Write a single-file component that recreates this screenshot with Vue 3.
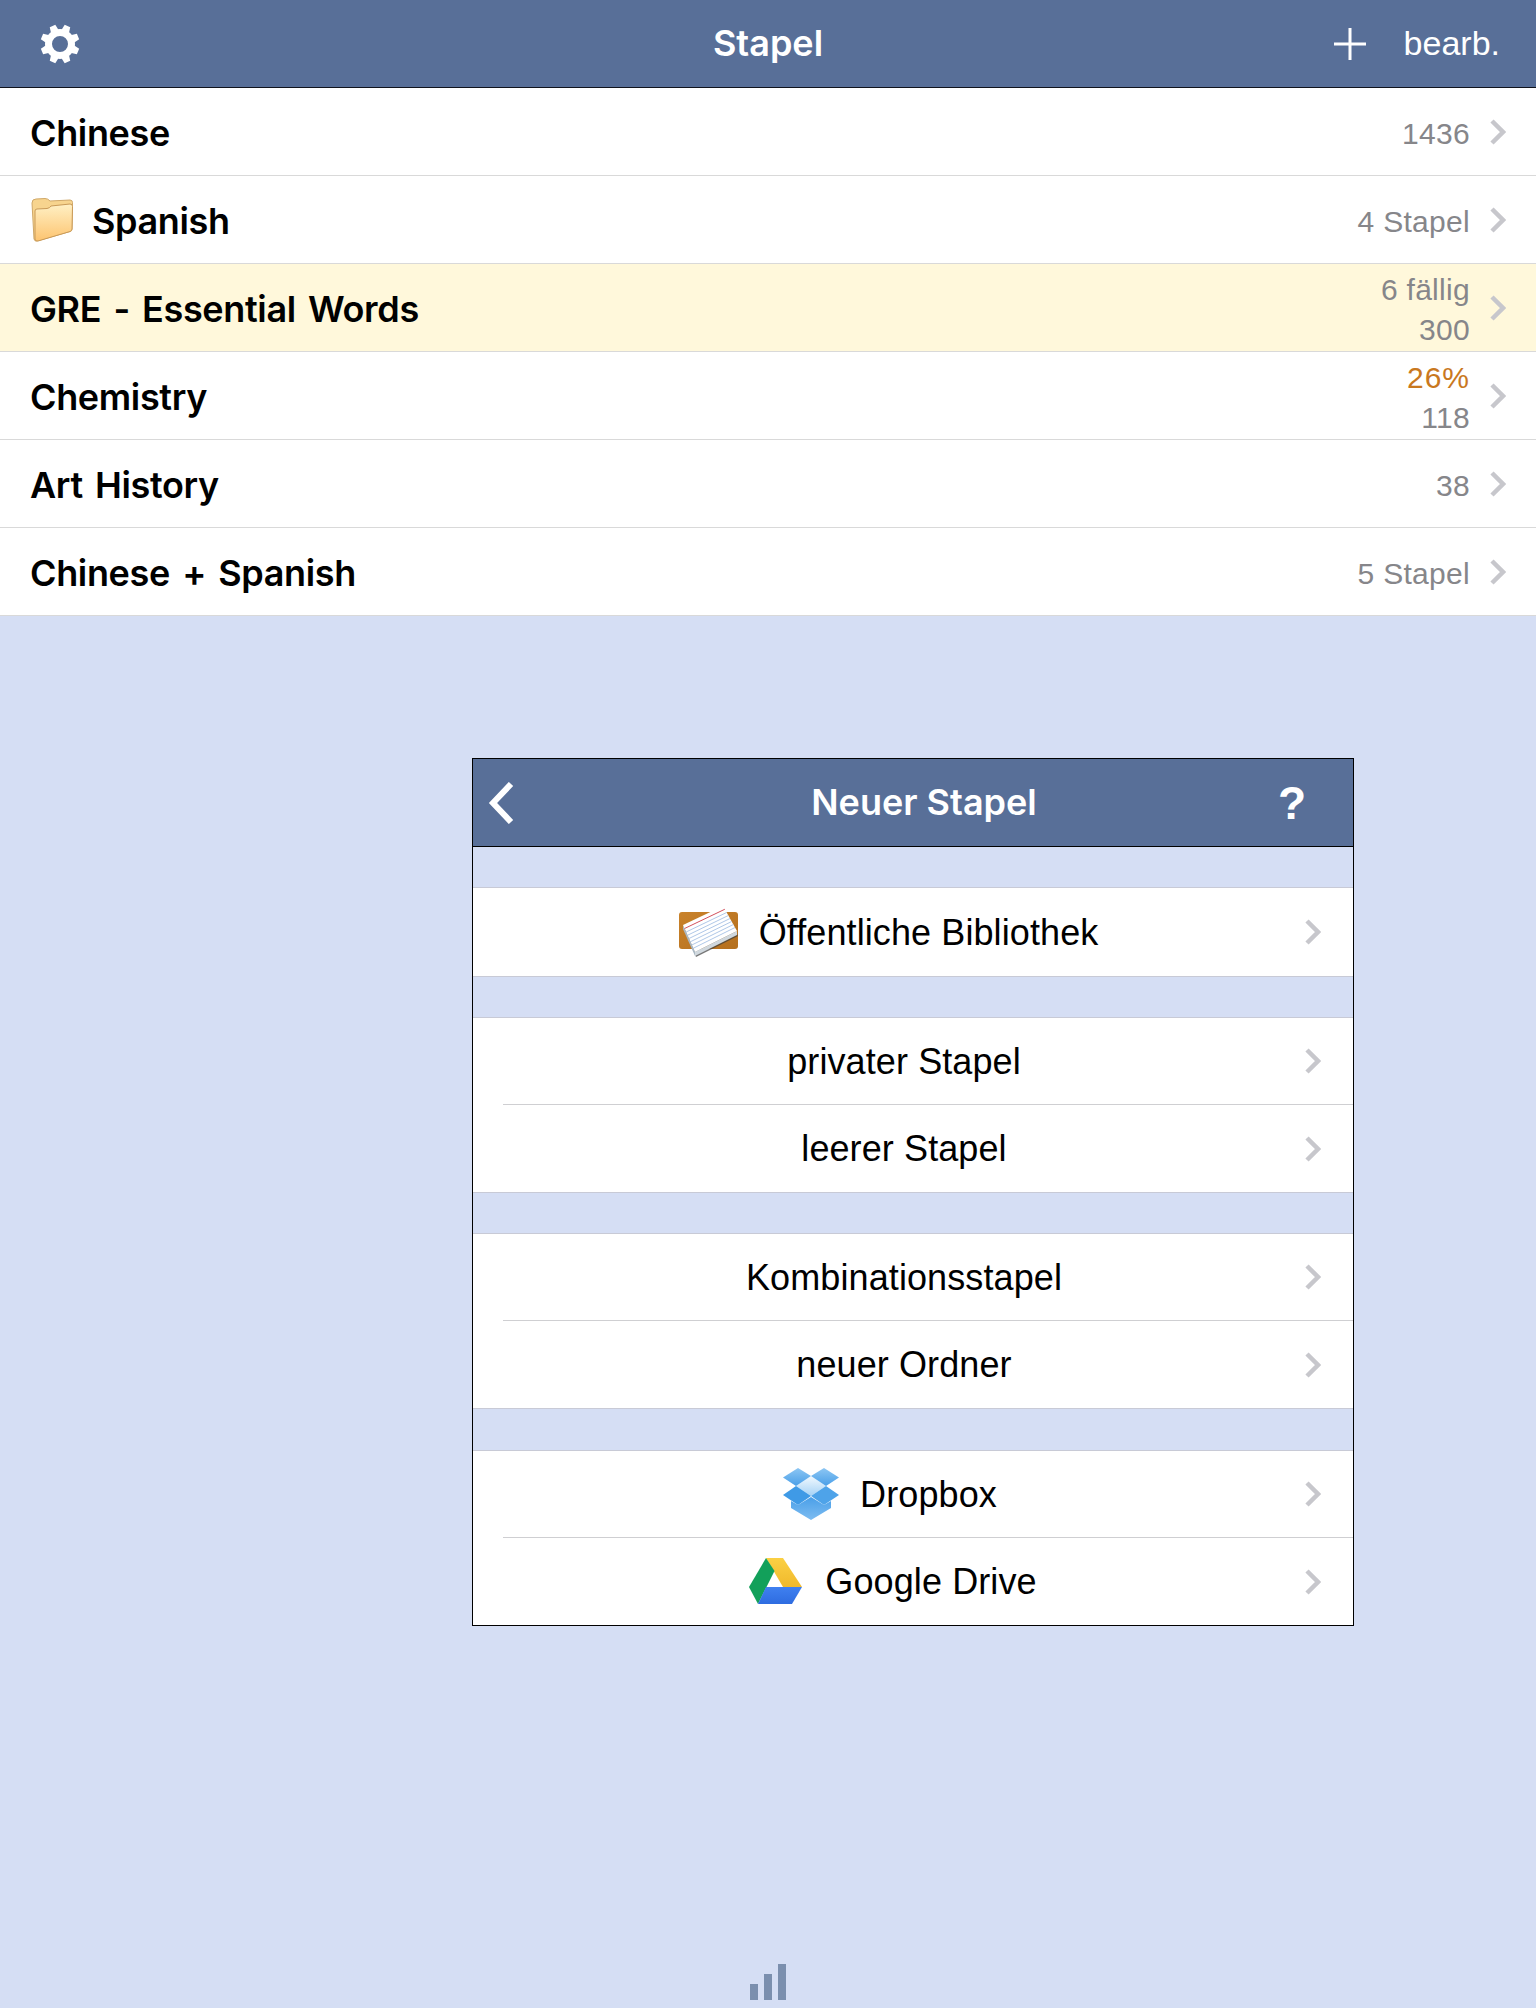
<script setup>
const decks = [
  { name: "Chinese", lines: ["1436"] },
  { name: "Spanish", lines: ["4 Stapel"], folder: true },
  { name: "GRE - Essential Words", lines: ["6 fällig", "300"], due: true },
  { name: "Chemistry", lines: ["26%", "118"], progress: true },
  { name: "Art History", lines: ["38"] },
  { name: "Chinese + Spanish", lines: ["5 Stapel"] },
];

const groups = [
  [{ label: "Öffentliche Bibliothek", icon: "cards" }],
  [{ label: "privater Stapel" }, { label: "leerer Stapel" }],
  [{ label: "Kombinationsstapel" }, { label: "neuer Ordner" }],
  [
    { label: "Dropbox", icon: "dropbox" },
    { label: "Google Drive", icon: "drive" },
  ],
];

const teeth = [0, 45, 90, 135, 180, 225, 270, 315];

// ruled lines on the index card, between its left and right edge
function cardLine(t) {
  const x1 = 5 + 12 * t;
  const y1 = 20 + 27 * t;
  const x2 = 45 + 14 * t;
  const y2 = 1 + 25 * t;
  return `M${x1} ${y1}L${x2} ${y2}`;
}
const blueLines = [0.26, 0.38, 0.5, 0.62, 0.74, 0.86].map(cardLine);
const redLine = cardLine(0.13);
</script>

<template>
  <div class="page">
    <header class="navbar">
      <div class="nav-left">
        <svg class="gear" viewBox="-20 -20 40 40">
          <circle r="11.5" fill="none" stroke="#fff" stroke-width="7" />
          <path
            v-for="t in teeth"
            :key="t"
            d="M-4.2 -13 L-3 -19.5 L3 -19.5 L4.2 -13 Z"
            fill="#fff"
            :transform="`rotate(${t + 22.5})`"
          />
        </svg>
      </div>
      <div class="nav-title">Stapel</div>
      <div class="nav-right">
        <svg class="plus" viewBox="0 0 32 32">
          <path d="M16 0V32M0 16H32" stroke="#fff" stroke-width="3" fill="none" />
        </svg>
        <span class="edit">bearb.</span>
      </div>
    </header>

    <ul class="decks">
      <li v-for="deck in decks" :key="deck.name" class="deck" :class="{ due: deck.due }">
        <svg v-if="deck.folder" class="folder" viewBox="0 0 43 44">
          <defs>
            <linearGradient id="folderFront" x1="0" y1="0" x2="0" y2="1">
              <stop offset="0" stop-color="#fff0c4" />
              <stop offset="1" stop-color="#fdc470" />
            </linearGradient>
          </defs>
          <path
            d="M1 5 Q1 1 5 1 L14 0.5 Q17 0.5 19 3 L39 2 Q41.5 2 41.5 4.5 L41 31 Q41 33 39 33.5 L6 43 Q3.5 43.5 3 41 Z"
            fill="#f7d48e"
            stroke="#d0a868"
            stroke-width="1"
          />
          <path
            d="M4 13 Q4 11 6 11 L16 10.5 Q19 10 20 8 L39 6 Q41.5 6 41.5 8.5 L41 31 Q41 33 39 33.5 L7 43 Q4 43.5 4 41 Z"
            fill="url(#folderFront)"
            stroke="#c99a58"
            stroke-width="1"
          />
        </svg>
        <span class="deck-name">{{ deck.name }}</span>
        <div class="deck-info">
          <span
            v-for="(line, i) in deck.lines"
            :key="line"
            :class="{ orange: deck.progress && i === 0 }"
          >{{ line }}</span>
        </div>
        <svg class="chevron" viewBox="0 0 16 26">
          <path d="M2 2L13 13L2 24" fill="none" stroke="#c7c7cc" stroke-width="4.5" />
        </svg>
      </li>
    </ul>

    <section class="popover">
      <header class="pop-bar">
        <div class="pop-back">
          <svg class="back" viewBox="0 0 26 42">
            <path d="M23 2L5 21L23 40" fill="none" stroke="#fff" stroke-width="6" />
          </svg>
        </div>
        <div class="pop-title">Neuer Stapel</div>
        <div class="pop-help">?</div>
      </header>

      <div v-for="(group, g) in groups" :key="g" class="group">
        <div v-for="item in group" :key="item.label" class="item">
          <div class="item-body" :class="item.icon && `with-${item.icon}`">
            <svg v-if="item.icon === 'cards'" class="ic-cards" viewBox="0 0 62 54">
              <defs>
                <linearGradient id="wood" x1="0" y1="0" x2="1" y2="1">
                  <stop offset="0" stop-color="#c9822a" />
                  <stop offset="1" stop-color="#b46f1e" />
                </linearGradient>
              </defs>
              <rect x="1" y="7" width="59" height="37" rx="3" fill="url(#wood)" />
              <path d="M6 24L18 52L60 31L58 27Z" fill="#3c3c3c" opacity="0.7" />
              <path d="M5 20L17 47V51L5 24Z" fill="#a9b8c4" />
              <path d="M17 47L59 26V30L17 51Z" fill="#d0d8de" />
              <path d="M5 20L45 1L59 26L17 47Z" fill="#fff" />
              <path :d="redLine" stroke="#d2505c" stroke-width="1" />
              <path
                v-for="d in blueLines"
                :key="d"
                :d="d"
                stroke="#a6c1e4"
                stroke-width="0.9"
              />
            </svg>
            <svg v-else-if="item.icon === 'dropbox'" class="ic-dropbox" viewBox="0 0 56 52">
              <defs>
                <linearGradient id="boxTop" x1="0" y1="0" x2="0" y2="1">
                  <stop offset="0" stop-color="#8cc6f3" />
                  <stop offset="1" stop-color="#4a9fe8" />
                </linearGradient>
                <linearGradient id="boxLid" x1="0" y1="0" x2="0" y2="1">
                  <stop offset="0" stop-color="#f2f9fe" />
                  <stop offset="1" stop-color="#a5d2f6" />
                </linearGradient>
                <linearGradient id="boxLow" x1="0" y1="0" x2="0" y2="1">
                  <stop offset="0" stop-color="#4a9fe8" />
                  <stop offset="1" stop-color="#7dbcf1" />
                </linearGradient>
              </defs>
              <path d="M8 33L15 37L28 29V52L8 40Z" fill="url(#boxLow)" />
              <path d="M48 33L41 37L28 29V52L48 40Z" fill="url(#boxLow)" />
              <path d="M28 8L43 18L28 28L13 18Z" fill="url(#boxLid)" />
              <path d="M0 9.5L15 0L28 8L13 18Z" fill="url(#boxTop)" />
              <path d="M28 8L41 0L56 9.5L43 18Z" fill="url(#boxTop)" />
              <path d="M0 27L13 18L28 28L15 37Z" fill="#3f9ae6" />
              <path d="M28 28L43 18L56 27L41 37Z" fill="#4ea3e9" />
            </svg>
            <svg v-else-if="item.icon === 'drive'" class="ic-drive" viewBox="0 0 53 47">
              <defs>
                <linearGradient id="driveYellow" x1="0" y1="0" x2="0" y2="1">
                  <stop offset="0" stop-color="#fbd044" />
                  <stop offset="1" stop-color="#f0b92c" />
                </linearGradient>
                <linearGradient id="driveBlue" x1="0" y1="0" x2="0" y2="1">
                  <stop offset="0" stop-color="#3f80f0" />
                  <stop offset="1" stop-color="#2e6ce0" />
                </linearGradient>
              </defs>
              <path d="M17 0H34L53 29H34Z" fill="url(#driveYellow)" />
              <path d="M17 0L25.5 13L9 46L0 29Z" fill="#12a05a" />
              <path d="M17 29H53L43 46H9Z" fill="url(#driveBlue)" />
            </svg>
            <span class="item-label">{{ item.label }}</span>
          </div>
          <svg class="chevron item-chevron" viewBox="0 0 16 26">
            <path d="M2 2L13 13L2 24" fill="none" stroke="#c7c7cc" stroke-width="4.5" />
          </svg>
        </div>
      </div>
    </section>

    <footer class="stats">
      <svg class="bars" viewBox="0 0 36 36">
        <rect x="0" y="20" width="8" height="16" />
        <rect x="14" y="10" width="8" height="26" />
        <rect x="28" y="0" width="8" height="36" />
      </svg>
    </footer>
  </div>
</template>

<style>
html,
body {
  margin: 0;
  background: #d5def4;
}
</style>

<style scoped>
.page {
  display: flex;
  flex-direction: column;
  height: 2008px;
  overflow: hidden;
  background: #d5def4;
  font-family: "Liberation Sans", Arial, sans-serif;
  color: #000;
}

.navbar {
  display: flex;
  align-items: center;
  height: 87px;
  flex: none;
  background: #586f98;
  border-bottom: 1px solid #10131c;
  color: #fff;
}

.nav-left,
.nav-right {
  flex: 1;
  display: flex;
  align-items: center;
}

.nav-left {
  padding-left: 40px;
}

.gear {
  width: 40px;
  height: 40px;
}

.nav-title {
  font-family: Inter, "Liberation Sans", sans-serif;
  font-size: 36px;
  font-weight: 600;
  margin: -2px 4px 0 0;
}

.nav-right {
  justify-content: flex-end;
  padding-right: 36px;
}

.plus {
  width: 32px;
  height: 32px;
  margin-right: 38px;
}

.edit {
  font-size: 34px;
}

.decks {
  list-style: none;
  margin: 0;
  padding: 0;
  flex: none;
}

.deck {
  display: flex;
  align-items: center;
  height: 87px;
  padding: 0 30px;
  background: #fff;
  border-bottom: 1px solid #d9d9d9;
}

.deck.due {
  background: #fff8db;
}

.folder {
  width: 43px;
  height: 44px;
  margin: 0 18px 0 1px;
}

.deck-name {
  flex: 1;
  padding-top: 3px;
  font-family: Inter, "Liberation Sans", sans-serif;
  font-size: 36px;
  font-weight: 600;
  letter-spacing: -0.35px;
  word-spacing: 3.5px;
}

.deck-info {
  display: flex;
  flex-direction: column;
  align-items: flex-end;
  padding-top: 4px;
  font-size: 30px;
  line-height: 40px;
  letter-spacing: 0.3px;
  color: #86868a;
}

.orange {
  color: #c9781e;
  letter-spacing: 1px;
}

.chevron {
  width: 16px;
  height: 26px;
  flex: none;
}

.deck .chevron {
  margin-left: 20px;
}

.popover {
  flex: none;
  width: 880px;
  margin: 142px 0 0 472px;
  border: 1px solid #000;
}

.pop-bar {
  display: flex;
  align-items: center;
  height: 87px;
  background: #586f98;
  border-bottom: 1px solid #000;
  color: #fff;
}

.pop-back {
  width: 110px;
  padding-left: 15px;
  box-sizing: border-box;
}

.back {
  display: block;
  width: 26px;
  height: 42px;
}

.pop-title {
  flex: 1;
  padding-bottom: 2px;
  text-align: center;
  font-family: Inter, "Liberation Sans", sans-serif;
  font-size: 36px;
  font-weight: 600;
}

.pop-help {
  width: 88px;
  padding-right: 47px;
  box-sizing: border-box;
  text-align: right;
  font-size: 46px;
  font-weight: 700;
}

.group {
  margin-top: 40px;
  background: #fff;
  border-top: 1px solid #c8cad6;
  border-bottom: 1px solid #c8cad6;
}

.group:last-child {
  margin-top: 41px;
  border-bottom: none;
}

.item {
  position: relative;
  height: 87px;
  padding-right: 18px;
  display: flex;
}

.item:first-child {
  height: 86px;
}

.item:only-child {
  height: 88px;
}

.item + .item::before {
  content: "";
  position: absolute;
  top: -1px;
  left: 30px;
  right: 0;
  height: 1px;
  background: #cfcfd2;
}

.item + .item {
  margin-top: 1px;
}

.item-body {
  flex: 1;
  display: flex;
  align-items: center;
  justify-content: center;
  font-size: 36px;
  letter-spacing: 0.1px;
}

.item-label {
  padding-top: 1px;
}

.item-body.with-cards {
  padding-right: 32px;
}

.item-body.with-dropbox {
  padding-right: 28px;
}

.item-body.with-drive {
  padding-right: 22px;
}

.item-chevron {
  position: absolute;
  right: 32px;
  top: 50%;
  margin-top: -13px;
}

.ic-cards {
  width: 62px;
  height: 54px;
  margin-right: 19px;
}

.ic-dropbox {
  width: 56px;
  height: 52px;
  margin-right: 21px;
}

.ic-drive {
  width: 53px;
  height: 47px;
  margin-right: 23px;
}

.stats {
  margin-top: auto;
  height: 44px;
  display: flex;
  justify-content: center;
}

.bars {
  width: 36px;
  height: 36px;
  fill: #7b8fae;
}
</style>
